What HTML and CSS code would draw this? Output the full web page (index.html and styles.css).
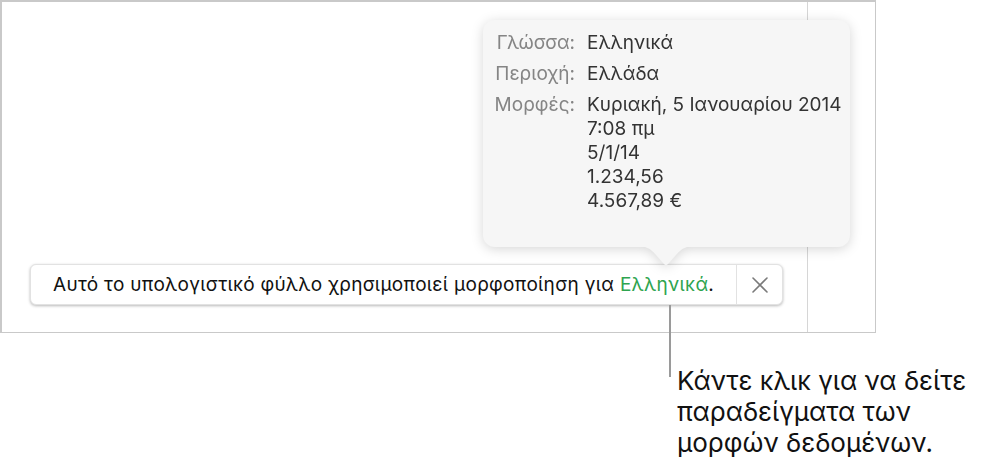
FILE: index.html
```html
<!DOCTYPE html>
<html lang="el">
<head>
  <meta charset="UTF-8" />
  <title>Μορφοποίηση γλώσσας</title>
  <link rel="stylesheet" href="styles.css">
</head>
<body>

  <div class="stage">

    <!-- Spreadsheet window -->
    <div class="frame">
      <div class="sheet">
        <div class="banner">
          <p class="banner-text">Αυτό το υπολογιστικό φύλλο χρησιμοποιεί μορφοποίηση για <span class="lang">Ελληνικά</span>.</p>
          <button class="close" aria-label="Κλείσιμο">
            <svg width="18" height="18" viewBox="0 0 18 18">
              <path d="M2 2 L16 16 M16 2 L2 16" stroke="#7a7a7a" stroke-width="1.6" stroke-linecap="round" fill="none"/>
            </svg>
          </button>
        </div>
      </div>
      <div class="sidebar"></div>
    </div>

    <!-- Popover with format examples -->
    <div class="popover">
      <div class="popover-box">
        <span class="label">Γλώσσα:</span>
        <span class="value">Ελληνικά</span>
        <span class="label">Περιοχή:</span>
        <span class="value">Ελλάδα</span>
        <span class="label">Μορφές:</span>
        <span class="value">
          Κυριακή, 5 Ιανουαρίου 2014<br>
          7:08 πμ<br>
          5/1/14<br>
          1.234,56<br>
          4.567,89 €
        </span>
      </div>
      <svg class="popover-arrow" width="60" height="20" viewBox="0 0 60 20">
        <path d="M0 0 C10 0 14 2 20 9 L28 18 Q30 20 32 18 L40 9 C46 2 50 0 60 0 Z" fill="#f6f6f6"/>
      </svg>
    </div>

    <!-- Callout -->
    <div class="leader"></div>
    <p class="caption">Κάντε κλικ για να δείτε παραδείγματα των μορφών δεδομένων.</p>

  </div>

</body>
</html>
```

FILE: styles.css
```css
/* General */
body {
  margin: 0;
  background: #fff;
  font-family: Inter, "Noto Sans", sans-serif;
  color: #1a1a1a;
}

.stage {
  position: relative;
  width: 988px;
  height: 473px;
}

/* Window frame */
.frame {
  display: grid;
  grid-template-columns: 1fr 68px;
  width: 876px;
  height: 333px;
  box-sizing: border-box;
  border: 2px solid #c9c9c9;
  border-right-width: 1px;
  border-bottom-width: 1px;
}

.sheet {
  display: flex;
  align-items: flex-end;
  padding: 0 0 27px 28px;
}

.sidebar {
  border-left: 1px solid #d6d6d6;
}

/* Banner */
.banner {
  display: flex;
  align-items: center;
  width: 753px;
  height: 41px;
  box-sizing: border-box;
  background: #fff;
  border: 1px solid #e2e2e2;
  border-radius: 6px;
  box-shadow: 0 1px 3px rgba(0, 0, 0, 0.28);
}

.banner-text {
  flex: 1;
  margin: 0;
  padding-left: 22px;
  font-size: 19px;
  letter-spacing: 0.3px;
  color: #111;
}

.lang {
  color: #2ea44f;
}

.close {
  display: flex;
  align-items: center;
  justify-content: center;
  width: 46px;
  height: 100%;
  padding: 0;
  background: none;
  border: none;
  border-left: 1px solid #e2e2e2;
}

/* Popover */
.popover {
  position: absolute;
  left: 483px;
  top: 20px;
  width: 367px;
  filter: drop-shadow(0 2px 6px rgba(0, 0, 0, 0.16));
}

.popover-box {
  display: grid;
  grid-template-columns: 92px 1fr;
  align-content: start;
  column-gap: 12px;
  row-gap: 7px;
  height: 227px;
  box-sizing: border-box;
  padding: 11px 0 0 0;
  background: #f6f6f6;
  border-radius: 12px;
  font-size: 19px;
  line-height: 24px;
}

.label {
  text-align: right;
  color: #858585;
}

.value {
  color: #333;
}

.popover-arrow {
  display: block;
  margin: -1px 0 0 153px;
}

/* Callout */
.leader {
  position: absolute;
  left: 669px;
  top: 305px;
  width: 2px;
  height: 72px;
  background: #9a9a9a;
}

.caption {
  width: 310px;
  margin: 32px 0 0 677px;
  font-size: 26px;
  line-height: 31px;
  color: #111;
}
```
